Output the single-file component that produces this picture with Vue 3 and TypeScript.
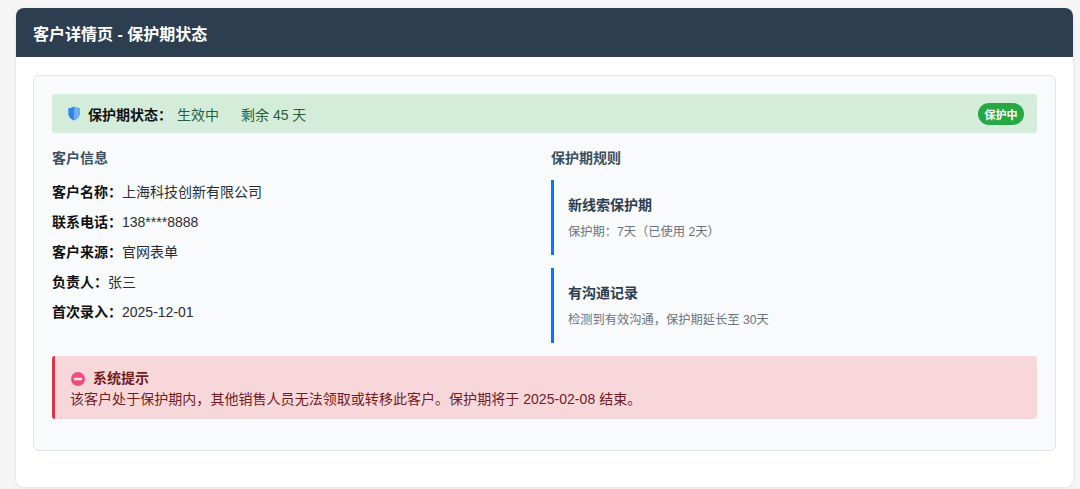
<script setup lang="ts">
const info: { label: string; value: string }[] = [
  { label: '客户名称\uFF1A', value: '上海科技创新有限公司' },
  { label: '联系电话\uFF1A', value: '138****8888' },
  { label: '客户来源\uFF1A', value: '官网表单' },
  { label: '负责人\uFF1A', value: '张三' },
  { label: '首次录入\uFF1A', value: '2025-12-01' },
]
const rules: { title: string; desc: string }[] = [
  { title: '新线索保护期', desc: '保护期\uFF1A7天\uFF08已使用 2天\uFF09' },
  { title: '有沟通记录', desc: '检测到有效沟通\uFF0C保护期延长至 30天' },
]
</script>

<template>
  <div class="page">
    <div class="card">
      <header class="card-head">客户详情页 - 保护期状态</header>
      <div class="card-body">
        <div class="box">
          <div class="status">
            <svg class="shield" width="12" height="15" viewBox="0 0 12 15" aria-hidden="true">
              <path d="M6 .5C8 1.500 10 2 11.700 2.200V7.500C11.700 10.800 9 13.300 6 14.500C3 13.300 .3 10.800 .3 7.500V2.200C2 2 4 1.500 6 .5Z" fill="#2f86ea" />
              <path d="M6 .5C8 1.500 10 2 11.700 2.200V7.500C11.700 10.800 9 13.300 6 14.500Z" fill="#6fadf0" />
            </svg>
            <strong class="status-label">保护期状态&#xFF1A;</strong>
            <span class="status-value">生效中</span>
            <span class="status-left">剩余 45 天</span>
            <span class="badge">保护中</span>
          </div>

          <div class="columns">
            <section>
              <h3 class="sec-title">客户信息</h3>
              <div class="info-list">
                <div v-for="row in info" :key="row.label" class="info-row">
                  <strong>{{ row.label }}</strong><span>{{ row.value }}</span>
                </div>
              </div>
            </section>
            <section>
              <h3 class="sec-title">保护期规则</h3>
              <div class="rule-list">
                <div v-for="rule in rules" :key="rule.title" class="rule">
                  <div class="rule-title">{{ rule.title }}</div>
                  <div class="rule-desc">{{ rule.desc }}</div>
                </div>
              </div>
            </section>
          </div>

          <div class="alert">
            <div class="alert-title">
              <svg width="14" height="14" viewBox="0 0 14 14" aria-hidden="true">
                <circle cx="7" cy="7" r="7" fill="#ec4f7c" />
                <rect x="3" y="5.700" width="8" height="2.600" rx=".6" fill="#fbe3e8" />
              </svg>
              <strong>系统提示</strong>
            </div>
            <div class="alert-text">该客户处于保护期内&#xFF0C;其他销售人员无法领取或转移此客户。保护期将于 2025-02-08 结束。</div>
          </div>
        </div>
      </div>
    </div>
  </div>
</template>

<style>
html, body { margin: 0; background: #f5f5f5; }
</style>

<style scoped>
.page {
  height: 489px;
  box-sizing: border-box;
  padding: 8px 7px 2px 16px;
  font-family: "Liberation Sans", "Noto Sans CJK SC", sans-serif;
  font-size: 14px;
  color: #212529;
  overflow: hidden;
}
.card {
  height: 479px;
  background: #fff;
  border-radius: 8px;
  overflow: hidden;
  box-shadow: 0 1px 4px rgba(0, 0, 0, .08);
}
.card-head {
  height: 49px;
  box-sizing: border-box;
  padding: 0 17px;
  display: flex;
  align-items: center;
  background: #2c3e50;
  color: #fff;
  font-size: 16px;
  font-weight: 700;
}
.card-body { padding: 18px 17px 0 17px; }
.box {
  height: 376px;
  box-sizing: border-box;
  padding: 18px;
  background: #f8fafc;
  border: 1px solid #e1e4e8;
  border-radius: 6px;
}
.status {
  height: 39px;
  box-sizing: border-box;
  padding: 0 13px 0 16px;
  display: flex;
  align-items: center;
  background: #d4edda;
  border-radius: 3px;
  color: #2a5e3a;
}
.shield { margin-right: 8px; flex: none; }
.status-label { color: #111; margin-right: 5px; }
.status-left { margin-left: 22px; }
.badge {
  margin-left: auto;
  height: 22px;
  width: 46px;
  justify-content: center;
  display: flex;
  align-items: center;
  background: #28a745;
  color: #fff;
  font-size: 11px;
  font-weight: 700;
  border-radius: 11px;
}
.columns {
  display: grid;
  grid-template-columns: 486px 486px;
  column-gap: 13px;
  margin-top: 13px;
}
.sec-title {
  margin: 0;
  height: 24px;
  line-height: 24px;
  font-size: 14px;
  font-weight: 700;
  color: #3d4f60;
}
.info-list { margin-top: 7px; }
.info-row {
  height: 30px;
  line-height: 30px;
  color: #2b2f33;
}
.info-row strong { color: #111; }
.rule-list {
  margin-top: 10px;
  display: flex;
  flex-direction: column;
  gap: 13px;
}
.rule {
  height: 75px;
  box-sizing: border-box;
  padding: 14px 0 0 14px;
  border-left: 3px solid #007bff;
}
.rule-title {
  font-size: 14px;
  font-weight: 700;
  color: #2c3e50;
  line-height: 22px;
}
.rule-desc {
  margin-top: 6px;
  font-size: 12.25px;
  line-height: 20px;
  color: #6c757d;
}
.alert {
  margin-top: 13px;
  height: 63px;
  box-sizing: border-box;
  padding: 12px 16px 0;
  background: #f8d7da;
  border-left: 3px solid #dc3545;
  border-radius: 3px;
  color: #721c24;
  line-height: 21px;
}
.alert-title {
  display: flex;
  align-items: center;
  gap: 8px;
  height: 21px;
}
.alert-text { margin-left: -1px; letter-spacing: .04px; }
</style>
